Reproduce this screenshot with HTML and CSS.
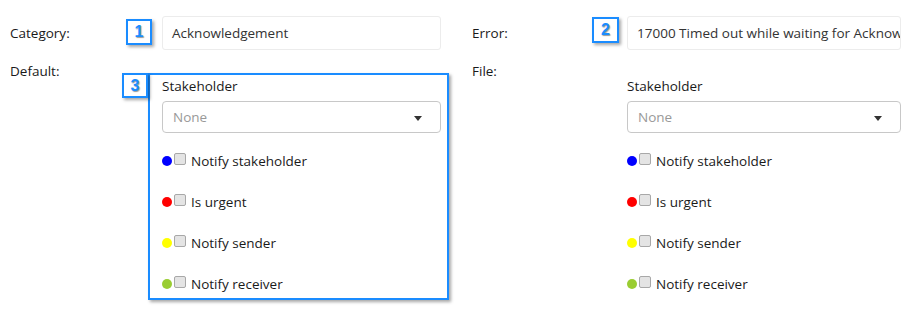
FILE: index.html
```html
<!DOCTYPE html>
<html lang="en">
<head>
  <meta charset="UTF-8">
  <title>Notification Rule</title>
  <link rel="stylesheet" href="styles.css">
</head>
<body>
  <div class="form">
    <!-- Left panel -->
    <div class="panel">
      <div class="label top">Category:</div>
      <div class="value">
        <div class="field">Acknowledgement</div>
        <span class="badge b1">1</span>
      </div>

      <div class="label">Default:</div>
      <div class="value notify">
        <span class="mark"></span>
        <span class="badge b3">3</span>
        <div class="sub-label">Stakeholder</div>
        <div class="select">None<span class="caret"></span></div>
        <div class="checks">
          <div class="check"><span class="dot blue"></span><input type="checkbox"><span>Notify stakeholder</span></div>
          <div class="check"><span class="dot red"></span><input type="checkbox"><span>Is urgent</span></div>
          <div class="check"><span class="dot yellow"></span><input type="checkbox"><span>Notify sender</span></div>
          <div class="check"><span class="dot green"></span><input type="checkbox"><span>Notify receiver</span></div>
        </div>
      </div>
    </div>

    <!-- Right panel -->
    <div class="panel right">
      <div class="label top">Error:</div>
      <div class="value">
        <div class="field">17000 Timed out while waiting for Acknowledgement</div>
        <span class="badge b2">2</span>
      </div>

      <div class="label">File:</div>
      <div class="value notify">
        <div class="sub-label">Stakeholder</div>
        <div class="select">None<span class="caret"></span></div>
        <div class="checks">
          <div class="check"><span class="dot blue"></span><input type="checkbox"><span>Notify stakeholder</span></div>
          <div class="check"><span class="dot red"></span><input type="checkbox"><span>Is urgent</span></div>
          <div class="check"><span class="dot yellow"></span><input type="checkbox"><span>Notify sender</span></div>
          <div class="check"><span class="dot green"></span><input type="checkbox"><span>Notify receiver</span></div>
        </div>
      </div>
    </div>
  </div>
</body>
</html>
```

FILE: styles.css
```css
html, body {
  min-height: 315px;
}
body {
  margin: 0;
  font-family: "Open Sans", Arial, sans-serif;
  font-size: 13.5px;
  color: #1a1a1a;
  background: #fff;
}
.form {
  display: flex;
  gap: 31px;
  padding: 16px 0 22px 10px;
}
.panel {
  display: grid;
  grid-template-columns: 152px 279px;
  row-gap: 12px;
  align-items: start;
}
.panel.right {
  grid-template-columns: 155px 274px;
}
.label {
  line-height: 18px;
  font-weight: 500;
}
.label.top {
  align-self: center;
}
.value {
  position: relative;
}
.field {
  height: 34px;
  box-sizing: border-box;
  border: 1px solid #ececec;
  border-radius: 3px;
  padding: 0 9px;
  line-height: 32px;
  white-space: nowrap;
  overflow: hidden;
  color: #333;
}
.notify {
  padding-top: 15px;
  padding-bottom: 7px;
}
.sub-label {
  line-height: 18px;
  font-weight: 500;
}
.select {
  position: relative;
  margin-top: 6px;
  height: 32px;
  box-sizing: border-box;
  border: 1px solid #c8c8c8;
  border-radius: 4px;
  padding: 0 10px;
  line-height: 30px;
  color: #999;
}
.caret {
  position: absolute;
  right: 18px;
  top: 14px;
  border-left: 4px solid transparent;
  border-right: 4px solid transparent;
  border-top: 5px solid #333;
}
.checks {
  display: flex;
  flex-direction: column;
  gap: 23px;
  padding-top: 19px;
}
.check {
  display: flex;
  align-items: center;
  height: 18px;
  line-height: 18px;
  font-weight: 500;
}
.dot {
  width: 10px;
  height: 10px;
  border-radius: 50%;
  margin-right: 2px;
}
.dot.blue { background: #0000ff; }
.dot.red { background: #ff0000; }
.dot.yellow { background: #ffff00; }
.dot.green { background: #9acd32; }
.check input {
  appearance: none;
  width: 12px;
  height: 12px;
  margin: -4px 5px 0 0;
  border: 1px solid #a8a8a8;
  border-radius: 2px;
  background: #e4e4e4;
}

/* annotation overlays */
.mark {
  position: absolute;
  left: -14px;
  right: -8px;
  top: 11px;
  bottom: 0;
  border: 2px solid #1a8cff;
  box-shadow: 2px 2px 3px rgba(0, 0, 0, 0.35);
}
.badge {
  position: absolute;
  width: 26px;
  height: 26px;
  box-sizing: border-box;
  border: 2px solid #1a8cff;
  background: #fff;
  box-shadow: 2px 2px 3px rgba(0, 0, 0, 0.35);
  color: #1a8cff;
  font-family: "Liberation Sans", Arial, sans-serif;
  font-weight: bold;
  font-size: 16px;
  line-height: 22px;
  text-align: center;
  text-shadow: 1px 1px 1px rgba(0, 0, 0, 0.4);
}
.b1 {
  left: -36px;
  top: 3px;
}
.b2 {
  left: -35px;
  top: 1px;
  width: 27px;
}
.b3 {
  left: -40px;
  top: 11px;
  height: 25px;
}
```
